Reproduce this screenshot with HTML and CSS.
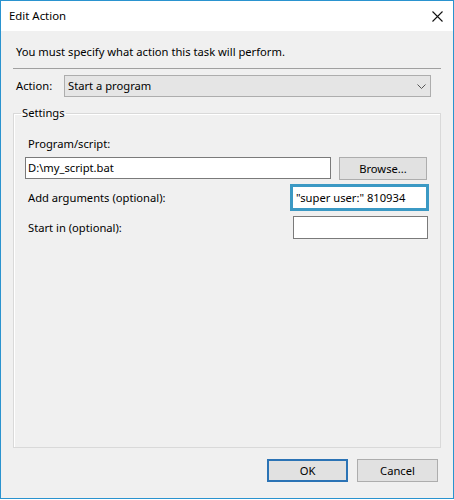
FILE: index.html
```html
<!DOCTYPE html>
<html>
<head>
<meta charset="utf-8">
<link rel="stylesheet" href="styles.css">
</head>
<body>
<div class="window">
  <div class="titlebar">
    <span class="title">Edit Action</span>
    <svg class="close" width="11" height="11" viewBox="0 0 11 11"><path d="M0.5 0.5 L10.5 10.5 M10.5 0.5 L0.5 10.5" stroke="#111" stroke-width="1.1" fill="none"/></svg>
  </div>
  <div class="content">
    <div class="instr">You must specify what action this task will perform.</div>
    <div class="sep"></div>
    <div class="action-row">
      <span class="action-label">Action:</span>
      <div class="select">
        <span>Start a program</span>
        <svg class="chev" width="9" height="5" viewBox="0 0 9 5"><path d="M0.5 0.5 L4.5 4.5 L8.5 0.5" stroke="#555" stroke-width="1" fill="none"/></svg>
      </div>
    </div>
    <fieldset class="group">
      <legend>Settings</legend>
      <div class="lbl-prog">Program/script:</div>
      <div class="row-prog">
        <div class="textbox prog">D:\my_script.bat</div>
        <div class="btn browse">Browse...</div>
      </div>
      <div class="row-arg">
        <span class="lbl">Add arguments (optional):</span>
        <div class="textbox focused">"super user:" 810934</div>
      </div>
      <div class="row-start">
        <span class="lbl">Start in (optional):</span>
        <div class="textbox start"></div>
      </div>
    </fieldset>
    <div class="footer">
      <div class="btn ok">OK</div>
      <div class="btn cancel">Cancel</div>
    </div>
  </div>
</div>
</body>
</html>
```

FILE: styles.css
```css
html, body {
  margin: 0;
  padding: 0;
  background: #ffffff;
}
body {
  font-family: "Noto Sans", "Open Sans", sans-serif;
  font-size: 11.2px;
  line-height: 16px;
  color: #000;
}
.window {
  width: 454px;
  height: 499px;
  box-sizing: border-box;
  border: 1px solid #2a93cf;
  background: #f0f0f0;
  display: flex;
  flex-direction: column;
}
.titlebar {
  height: 30px;
  background: #ffffff;
  display: flex;
  align-items: center;
  justify-content: space-between;
  padding: 0 10px 0 8px;
  flex-shrink: 0;
}
.title {
  font-size: 11.4px;
}
.close {
  display: block;
}
.content {
  display: flex;
  flex-direction: column;
}
.instr {
  margin: 13px 0 0 15px;
}
.sep {
  margin: 8px 12px 0 12px;
  height: 1px;
  background: #a0a0a0;
}
.action-row {
  display: flex;
  align-items: center;
  margin: 6px 0 0 15px;
}
.action-label {
  width: 48px;
}
.select {
  width: 367px;
  height: 22px;
  box-sizing: border-box;
  border: 1px solid #adadad;
  background: #e5e5e5;
  display: flex;
  align-items: center;
  justify-content: space-between;
  padding: 0 4px 0 3px;
}
.chev {
  display: block;
}
.group {
  margin: 8px 12px 0 12px;
  padding: 0 12px 0 11px;
  border: 1px solid #d9d9d9;
  box-shadow: inset 1px 1px 0 #fff;
  height: 343px;
  box-sizing: border-box;
  min-width: 0;
}
.group legend {
  padding: 0 1px;
  margin-left: -4px;
  line-height: 16px;
}
.lbl-prog {
  margin: 15px 0 0 3px;
}
.row-prog {
  display: flex;
  align-items: flex-start;
  margin-top: 5px;
  gap: 8px;
}
.textbox {
  background: #fff;
  border: 1px solid #7a7a7a;
  box-sizing: border-box;
  height: 22px;
  padding: 0 2px;
  display: flex;
  align-items: center;
  white-space: nowrap;
}
.prog {
  width: 306px;
}
.btn {
  box-sizing: border-box;
  height: 23px;
  border: 1px solid #adadad;
  background: #e1e1e1;
  display: flex;
  align-items: center;
  justify-content: center;
}
.browse {
  width: 88px;
}
.row-arg, .row-start {
  display: flex;
  align-items: center;
}
.lbl {
  margin-left: 3px;
}
.row-arg {
  margin-top: 4px;
}
.focused {
  margin-left: auto;
  margin-right: -1px;
  width: 139px;
  height: 27px;
  border: 3px solid #3b99c4;
  padding: 0 3px;
}
.row-start {
  margin-top: 5px;
}
.start {
  margin-left: auto;
  width: 135px;
  height: 23px;
}
.footer {
  display: flex;
  justify-content: flex-end;
  gap: 9px;
  margin: 11px 15px 0 0;
}
.ok, .cancel {
  width: 81px;
}
.ok {
  border: 2px solid #2b73b5;
}
```
